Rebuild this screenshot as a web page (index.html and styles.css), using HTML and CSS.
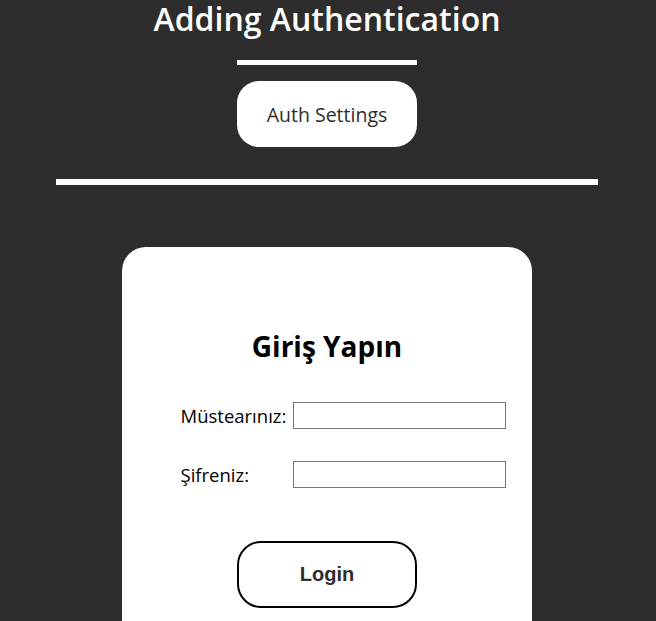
FILE: index.html
```html
<!DOCTYPE html>
<html lang="tr">
<head>
<meta charset="utf-8">
<link rel="stylesheet" href="styles.css">
</head>
<body>
<header class="top">
  <h1 class="title">Adding Authentication</h1>
  <div class="short-rule"></div>
  <button class="settings-btn">Auth Settings</button>
  <div class="long-rule"></div>
</header>
<main class="card">
  <h2 class="card-title">Giriş Yapın</h2>
  <form class="form">
    <label class="label" for="u">Müstearınız:</label>
    <input class="field" id="u" type="text">
    <label class="label" for="p">Şifreniz:</label>
    <input class="field" id="p" type="password">
  </form>
  <button class="login-btn">Login</button>
</main>
</body>
</html>
```
FILE: styles.css
```css
html, body {
  margin: 0;
  padding: 0;
  background: #2d2d2d;
  font-family: "Open Sans", "Noto Sans", sans-serif;
  overflow: hidden;
}
body {
  padding-right: 2px;
}
.top {
  display: flex;
  flex-direction: column;
  align-items: center;
}
.title {
  margin: 0;
  color: #fff;
  font-size: 32px;
  font-weight: 600;
  line-height: 40px;
  height: 40px;
  margin-top: -1px;
}
.short-rule {
  width: 180px;
  height: 5px;
  background: #fff;
  margin-top: 21px;
}
.settings-btn {
  margin-top: 16px;
  width: 180px;
  height: 66px;
  border: none;
  border-radius: 22px;
  background: #fff;
  color: #2d2d2d;
  font-family: "Open Sans", sans-serif;
  font-size: 19.5px;
  font-weight: 500;
  padding: 0;
}
.long-rule {
  width: 542px;
  height: 6px;
  background: #fff;
  margin-top: 32px;
}
.card {
  width: 410px;
  margin: 62px auto 0;
  background: #fff;
  border-radius: 24px;
  height: 420px;
  display: flex;
  flex-direction: column;
  align-items: center;
}
.card-title {
  margin: 80px 0 0;
  font-size: 28px;
  font-weight: 700;
  line-height: 38px;
  color: #000;
}
.form {
  margin-top: 37px;
  display: grid;
  grid-template-columns: 112px 213px;
  row-gap: 32px;
  align-items: center;
  margin-left: 32px;
}
.label {
  font-size: 18.5px;
  color: #000;
}
.field {
  box-sizing: border-box;
  width: 213px;
  height: 27px;
  border: 1px solid #767676;
  margin: 0;
  padding: 0 4px;
}
.login-btn {
  margin-top: 53px;
  width: 180px;
  height: 67px;
  box-sizing: border-box;
  border: 2px solid #000;
  border-radius: 24px;
  background: #fff;
  color: #2d2d2d;
  font-family: "Liberation Sans", Arial, sans-serif;
  font-size: 20px;
  font-weight: 700;
  padding: 0;
}
```
